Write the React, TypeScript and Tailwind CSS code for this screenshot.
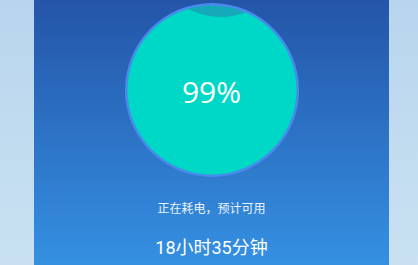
import React from "react";

function BatteryCircle() {
  return (
    <div className="relative w-[174px] h-[174px] mt-[3px] flex items-center justify-center">
      <svg className="absolute inset-0" width="174" height="174" viewBox="0 0 174 174">
        <defs>
          <clipPath id="inner">
            <circle cx="87" cy="87" r="84.5" />
          </clipPath>
        </defs>
        <circle cx="87" cy="87" r="87" fill="#4a8aee" />
        <circle cx="87" cy="87" r="84.5" fill="#16a9ba" />
        <path
          d="M -10 -6 Q 30 -10 63 6 Q 94 21 124 8 Q 150 -4 190 -6 L 190 190 L -10 190 Z"
          fill="#00d8c7"
          clipPath="url(#inner)"
        />
      </svg>
      <span className="relative text-white text-[30px] leading-none mt-[3px] font-['Open_Sans',sans-serif]">
        99%
      </span>
    </div>
  );
}

export default function App() {
  return (
    <div className="flex w-[418px] h-[265px] overflow-hidden bg-gradient-to-b from-[#b8d5ee] to-[#c9e1f1]">
      <div className="w-[34px] shrink-0" />
      <div className="w-[355px] shrink-0 flex flex-col items-center bg-gradient-to-b from-[#2455a8] to-[#3590e2]">
        <BatteryCircle />
        <div className="mt-[23px] text-[12px] leading-[16px] text-white/90 font-['Noto_Sans_CJK_SC',sans-serif]">
          正在耗电，预计可用
        </div>
        <div className="mt-[20px] text-[18px] leading-[24px] text-white font-['Roboto','Noto_Sans_CJK_SC',sans-serif]">
          18小时35分钟
        </div>
      </div>
      <div className="flex-1" />
    </div>
  );
}
